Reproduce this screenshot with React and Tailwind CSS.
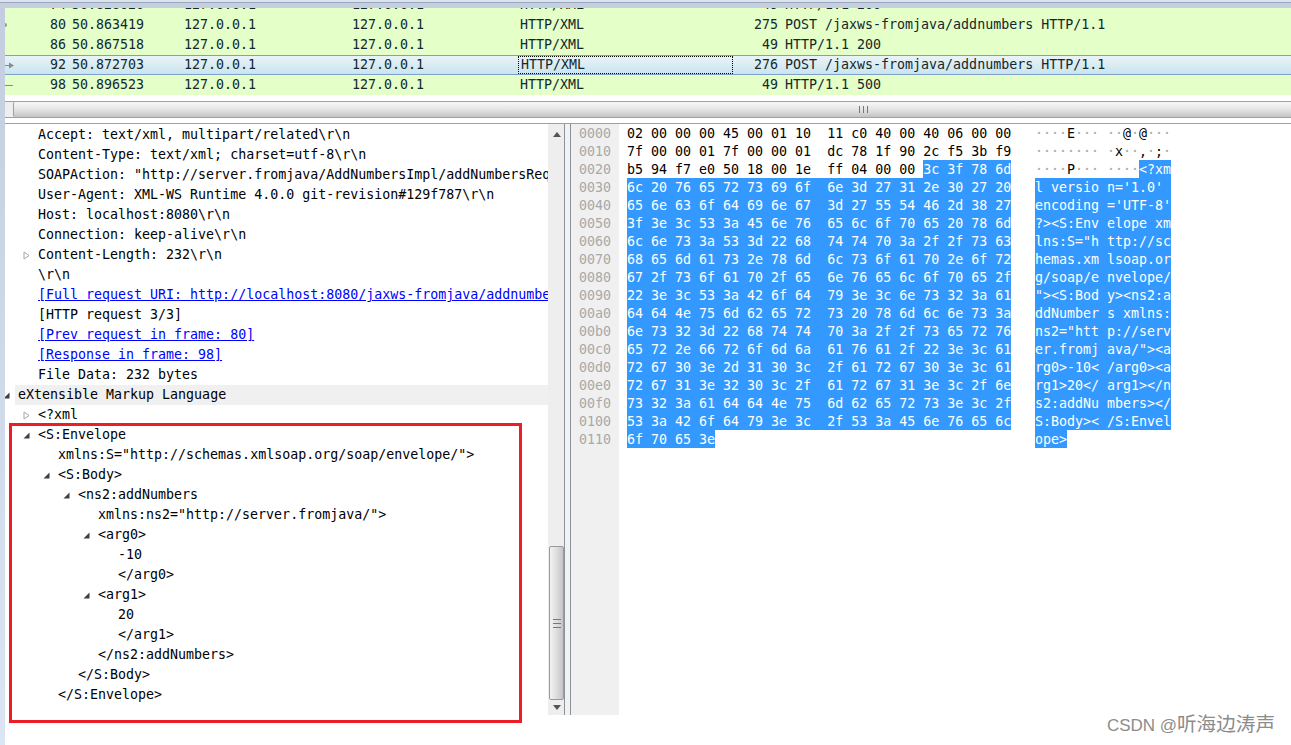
import React from "react";

const mono = "font-['DejaVu_Sans_Mono','Liberation_Mono',monospace] text-[13.3px] whitespace-pre";

const packets = [
  { no: "80", time: "50.863419", len: "275", info: "POST /jaxws-fromjava/addnumbers HTTP/1.1", mark: "dot" },
  { no: "86", time: "50.867518", len: "49", info: "HTTP/1.1 200" },
  { no: "92", time: "50.872703", len: "276", info: "POST /jaxws-fromjava/addnumbers HTTP/1.1", mark: "arrow", selected: true },
  { no: "98", time: "50.896523", len: "49", info: "HTTP/1.1 500", mark: "line" },
];

const tree = [
  { text: "Accept: text/xml, multipart/related\\r\\n", pad: "pl-[33px]" },
  { text: "Content-Type: text/xml; charset=utf-8\\r\\n", pad: "pl-[33px]" },
  { text: 'SOAPAction: "http://server.fromjava/AddNumbersImpl/addNumbersRequest"\\r\\n', pad: "pl-[33px]" },
  { text: "User-Agent: XML-WS Runtime 4.0.0 git-revision#129f787\\r\\n", pad: "pl-[33px]" },
  { text: "Host: localhost:8080\\r\\n", pad: "pl-[33px]" },
  { text: "Connection: keep-alive\\r\\n", pad: "pl-[33px]" },
  { text: "Content-Length: 232\\r\\n", pad: "pl-[33px]", arrow: "closed" },
  { text: "\\r\\n", pad: "pl-[33px]" },
  { text: "[Full request URI: http://localhost:8080/jaxws-fromjava/addnumbers]", pad: "pl-[33px]", link: true },
  { text: "[HTTP request 3/3]", pad: "pl-[33px]" },
  { text: "[Prev request in frame: 80]", pad: "pl-[33px]", link: true },
  { text: "[Response in frame: 98]", pad: "pl-[33px]", link: true },
  { text: "File Data: 232 bytes", pad: "pl-[33px]" },
  { text: "eXtensible Markup Language", pad: "pl-[13px]", arrow: "open", section: true },
  { text: "<?xml", pad: "pl-[33px]", arrow: "closed" },
  { text: "<S:Envelope", pad: "pl-[33px]", arrow: "open" },
  { text: 'xmlns:S="http://schemas.xmlsoap.org/soap/envelope/">', pad: "pl-[53px]" },
  { text: "<S:Body>", pad: "pl-[53px]", arrow: "open" },
  { text: "<ns2:addNumbers", pad: "pl-[73px]", arrow: "open" },
  { text: 'xmlns:ns2="http://server.fromjava/">', pad: "pl-[93px]" },
  { text: "<arg0>", pad: "pl-[93px]", arrow: "open" },
  { text: "-10", pad: "pl-[113px]" },
  { text: "</arg0>", pad: "pl-[113px]" },
  { text: "<arg1>", pad: "pl-[93px]", arrow: "open" },
  { text: "20", pad: "pl-[113px]" },
  { text: "</arg1>", pad: "pl-[113px]" },
  { text: "</ns2:addNumbers>", pad: "pl-[93px]" },
  { text: "</S:Body>", pad: "pl-[73px]" },
  { text: "</S:Envelope>", pad: "pl-[53px]" },
];

const hexRows = [
  "02 00 00 00 45 00 01 10  11 c0 40 00 40 06 00 00",
  "7f 00 00 01 7f 00 00 01  dc 78 1f 90 2c f5 3b f9",
  "b5 94 f7 e0 50 18 00 1e  ff 04 00 00 3c 3f 78 6d",
  "6c 20 76 65 72 73 69 6f  6e 3d 27 31 2e 30 27 20",
  "65 6e 63 6f 64 69 6e 67  3d 27 55 54 46 2d 38 27",
  "3f 3e 3c 53 3a 45 6e 76  65 6c 6f 70 65 20 78 6d",
  "6c 6e 73 3a 53 3d 22 68  74 74 70 3a 2f 2f 73 63",
  "68 65 6d 61 73 2e 78 6d  6c 73 6f 61 70 2e 6f 72",
  "67 2f 73 6f 61 70 2f 65  6e 76 65 6c 6f 70 65 2f",
  "22 3e 3c 53 3a 42 6f 64  79 3e 3c 6e 73 32 3a 61",
  "64 64 4e 75 6d 62 65 72  73 20 78 6d 6c 6e 73 3a",
  "6e 73 32 3d 22 68 74 74  70 3a 2f 2f 73 65 72 76",
  "65 72 2e 66 72 6f 6d 6a  61 76 61 2f 22 3e 3c 61",
  "72 67 30 3e 2d 31 30 3c  2f 61 72 67 30 3e 3c 61",
  "72 67 31 3e 32 30 3c 2f  61 72 67 31 3e 3c 2f 6e",
  "73 32 3a 61 64 64 4e 75  6d 62 65 72 73 3e 3c 2f",
  "53 3a 42 6f 64 79 3e 3c  2f 53 3a 45 6e 76 65 6c",
  "6f 70 65 3e",
];

// printable bytes as text, the rest as grey dots
const toAscii = (row) => {
  const bytes = row.trim().split(/\s+/);
  return bytes.map((b, i) => {
    const code = parseInt(b, 16);
    const ch = code >= 32 && code < 127 ? String.fromCharCode(code) : "\u00b7";
    return { ch, dot: ch === "\u00b7", gap: i === 7 };
  });
};

const PacketMark = ({ mark }) => (
  <span className="w-[10px] h-full flex items-center shrink-0">
    {mark === "dot" && <span className="w-[2px] h-[4px] bg-[#9a9a9a] rounded-r-full" />}
    {mark === "arrow" && (
      <svg width="10" height="7" viewBox="0 0 10 7">
        <path d="M0 3.5h5" stroke="#8a8a8a" strokeWidth="1" />
        <path d="M4 0.5l5 3-5 3z" fill="#8a8a8a" />
      </svg>
    )}
    {mark === "line" && <span className="w-[8px] h-px bg-[#8a8a8a]" />}
  </span>
);

const PacketRow = ({ no, time, len, info, mark, selected }) => (
  <div
    className={`flex items-center h-5 shrink-0 text-[#12272e] ${mono} ${
      selected ? "border-y border-[#7f9fc8] bg-gradient-to-b from-[#eaf4f8] to-[#c9e4ef]" : "bg-[#e4ffc7]"
    }`}
  >
    <PacketMark mark={mark} />
    <span className="w-[51px] text-right shrink-0">{no}</span>
    <span className="w-[118px] pl-[6px] shrink-0">{time}</span>
    <span className="w-[168px] shrink-0">127.0.0.1</span>
    <span className="w-[166px] shrink-0">127.0.0.1</span>
    <span
      className={`w-[215px] pl-[2px] h-full flex items-center shrink-0 ${
        selected ? "border border-dotted border-black" : ""
      }`}
    >
      HTTP/XML
    </span>
    <span className="w-[45px] text-right shrink-0">{len}</span>
    <span className="pl-[7px]">{info}</span>
  </div>
);

const Arrow = ({ type }) => (
  <span className="-ml-5 w-5 h-full flex items-center shrink-0">
    {type === "closed" ? (
      <svg className="ml-[5px]" width="7" height="9" viewBox="0 0 7 9">
        <path d="M1 1l5 3.5-5 3.5z" fill="none" stroke="#a6a6a6" />
      </svg>
    ) : (
      <svg className="ml-[5px]" width="7" height="7" viewBox="0 0 7 7">
        <path d="M6.5 0.5v6h-6z" fill="#3f3f3f" />
      </svg>
    )}
  </span>
);

const TreeRow = ({ text, pad, arrow, link, section }) => (
  <div className={`flex items-center h-5 shrink-0 overflow-hidden ${pad} ${section ? "bg-[linear-gradient(to_right,transparent_10px,#f0f0f0_10px)]" : ""}`}>
    {arrow && <Arrow type={arrow} />}
    <span className={link ? "text-[#0000ff] underline" : "text-black"}>{text}</span>
  </div>
);

const HexRow = ({ row, index }) => {
  const start = index < 2 ? row.length : index === 2 ? 37 : 0;
  return (
    <div className="h-[18px] leading-[20px]">
      {start > 0 && <span className="text-black">{row.slice(0, start)}</span>}
      {start < row.length && (
        <span className="bg-[#3399ff] text-white inline-block h-[18px] align-top">{row.slice(start)}</span>
      )}
    </div>
  );
};

const AsciiRow = ({ row, index }) => {
  const chars = toAscii(row);
  const start = index < 2 ? chars.length : index === 2 ? 12 : 0;
  return (
    <div className="h-[18px] leading-[20px] flex">
      {chars.map((c, i) => {
        const sel = i >= start;
        const color = sel ? "bg-[#3399ff] text-white" : c.dot ? "text-[#a8a8a8]" : "text-black";
        return (
          <span key={i} className={`${color} ${c.gap ? "w-4" : "w-2"} h-[18px] inline-block`}>
            {c.ch}
          </span>
        );
      })}
    </div>
  );
};

const VScrollbar = () => (
  <div className="w-4 shrink-0 bg-[#eeeeee] flex flex-col pl-px">
    <div className="h-5 flex items-center justify-center shrink-0">
      <svg width="8" height="5" viewBox="0 0 8 5"><path d="M4 0l4 5H0z" fill="#555" /></svg>
    </div>
    <div className="flex-1" />
    <div className="h-[154px] shrink-0 border border-[#9a9a9a] rounded-[2px] bg-gradient-to-r from-[#f2f2f2] via-[#dedede] to-[#c4c4c8] flex items-center justify-center">
      <div className="w-2 h-[9px] border-y border-[#777] flex flex-col justify-center">
        <div className="h-px bg-[#777]" />
      </div>
    </div>
    <div className="h-[15px] flex items-center justify-center shrink-0">
      <svg width="8" height="5" viewBox="0 0 8 5"><path d="M0 0h8L4 5z" fill="#555" /></svg>
    </div>
  </div>
);

export default function App() {
  return (
    <div className="relative w-[1291px] h-[745px] bg-white overflow-hidden flex">
      <div className="w-[5px] shrink-0 bg-gradient-to-b from-[#c3cddf] to-[#dbe5f3]" />

      <div className="flex-1 min-w-0 flex flex-col">
        {/* packet list */}
        <div className="h-2 shrink-0 -ml-[5px] bg-[#c5cfe0] border-t-[2px] border-[#dde3ee]">
          <div className="h-px bg-[#9aa8be]" />
        </div>
        <div className={`h-[7px] shrink-0 overflow-hidden bg-[#e4ffc7] flex items-end text-[#12272e] ${mono}`}>
          <PacketRow no="74" time="50.828620" len="49" info="HTTP/1.1 200" />
        </div>
        {packets.map((p) => (
          <PacketRow key={p.no} {...p} />
        ))}

        {/* horizontal scrollbar */}
        <div className="h-[28px] shrink-0 pt-[6px] flex flex-col">
          <div className="h-[17px] border-y border-[#a0a0a0] bg-[#eeeeee] pl-2 flex">
            <div className="flex-1 border-l border-[#a0a0a0] rounded-l-[2px] bg-gradient-to-b from-[#f8f8f8] via-[#e4e4e4] to-[#c4c4c4] flex items-center pl-[845px]">
              <div className="w-[9px] h-[7px] flex justify-between">
                <span className="w-px h-full bg-[#777]" />
                <span className="w-px h-full bg-[#777]" />
                <span className="w-px h-full bg-[#777]" />
              </div>
            </div>
          </div>
        </div>

        {/* detail and bytes panes */}
        <div className={`h-[592px] shrink-0 border-t border-[#a0a0a0] flex ${mono}`}>
          <div className="w-[543px] shrink-0 flex flex-col overflow-hidden pt-px">
            {tree.map((row) => (
              <TreeRow key={row.text} {...row} />
            ))}
          </div>
          <VScrollbar />
          <div className="w-[7px] shrink-0 border-x border-[#8a929c] bg-[#f2f2f2]" />
          <div className="w-12 shrink-0 bg-[#f0f0f0] pl-[8px] text-[#a8a8a8]">
            {hexRows.map((r, i) => (
              <div key={i} className="h-[18px] leading-[20px]">
                {(i * 16).toString(16).padStart(4, "0")}
              </div>
            ))}
          </div>
          <div className="pl-2 w-[416px] shrink-0">
            {hexRows.map((r, i) => (
              <HexRow key={i} row={r} index={i} />
            ))}
          </div>
          <div>
            {hexRows.map((r, i) => (
              <AsciiRow key={i} row={r} index={i} />
            ))}
          </div>
        </div>
      </div>

      {/* annotation and watermark on top of the capture */}
      <div className="absolute left-[9px] top-[423px] w-[513px] h-[300px] border-[3px] border-[#ee1c25]" />
      <div className="absolute right-[16px] bottom-[8px] leading-[22px] text-[#8c8c8c] font-['Liberation_Sans','Noto_Sans_CJK_SC',sans-serif]">
        <span className="text-[17px]">CSDN @</span>
        <span className="text-[19.6px]">听海边涛声</span>
      </div>
    </div>
  );
}
